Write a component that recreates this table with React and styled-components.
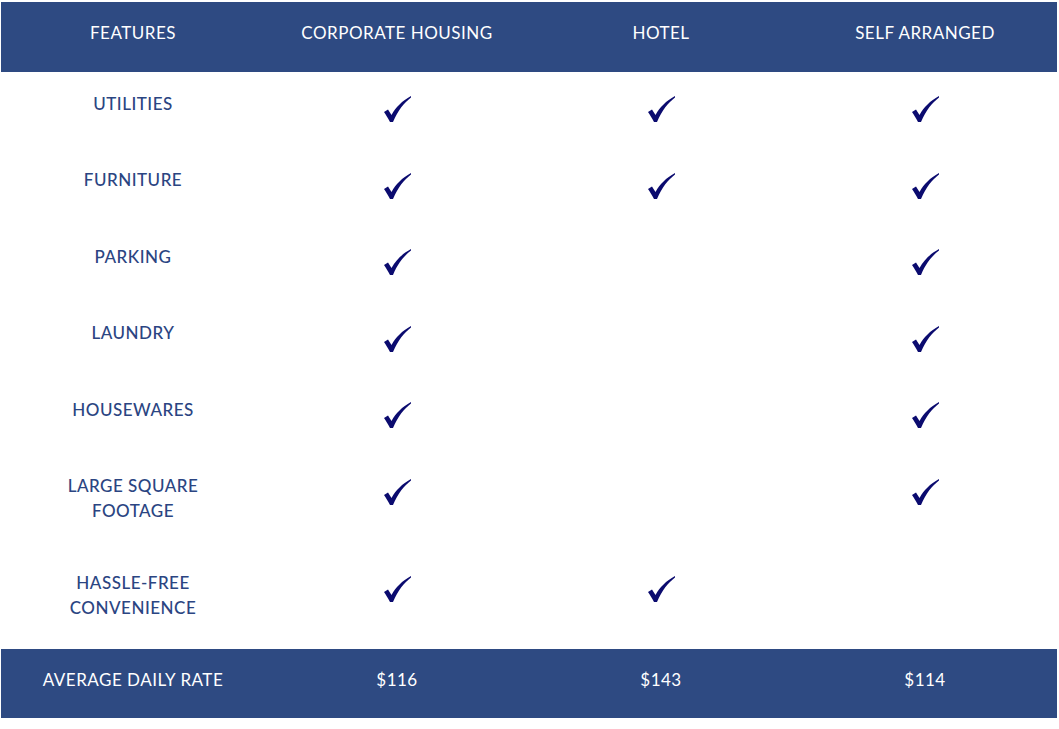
import React from "react";
import styled, { createGlobalStyle } from "styled-components";

const GlobalStyle = createGlobalStyle`
  body {
    margin: 0;
    background: #ffffff;
    font-family: "Lato", "Open Sans", sans-serif;
  }
`;

//전체 표
const Table = styled.div`
  width: 1056px;
  margin: 2px 1px 0;
`;

const Row = styled.div`
  display: grid;
  grid-template-columns: repeat(4, 264px);
  background: ${(p) => (p.$dark ? "#2e4a82" : "#ffffff")};
  min-height: ${(p) => p.$height}px;
  box-sizing: border-box;
`;

const Cell = styled.div`
  display: flex;
  flex-direction: column;
  align-items: center;
  text-align: center;
  padding-top: ${(p) => p.$top}px;
  font-size: 17px;
  line-height: 25px;
  letter-spacing: 0.5px;
  color: ${(p) => (p.$light ? "#ffffff" : "#2b4582")};
  font-weight: ${(p) => (p.$light ? 400 : 500)};
`;

const CheckWrap = styled.div`
  padding-top: 24px;
  display: flex;
  justify-content: center;
`;

const Check = () => (
  <svg width="27" height="26" viewBox="0 0 27 26">
    <path
      d="M0 16 L4 13.5 L7.5 19 C12 11 18 5 27 0 L27 1.5 C20 7 14 14 9 26 L6 26 C4 22 2 19 0 16 Z"
      fill="#0b0b6f"
    />
  </svg>
);

const headers = ["FEATURES", "CORPORATE HOUSING", "HOTEL", "SELF ARRANGED"];

const features = [
  { name: ["UTILITIES"], marks: [true, true, true] },
  { name: ["FURNITURE"], marks: [true, true, true] },
  { name: ["PARKING"], marks: [true, false, true] },
  { name: ["LAUNDRY"], marks: [true, false, true] },
  { name: ["HOUSEWARES"], marks: [true, false, true] },
  { name: ["LARGE SQUARE", "FOOTAGE"], marks: [true, false, true] },
  { name: ["HASSLE-FREE", "CONVENIENCE"], marks: [true, true, false] },
];

const rates = ["AVERAGE DAILY RATE", "$116", "$143", "$114"];

const App = () => {
  return (
    <>
      <GlobalStyle />
      <Table>
        <Row $dark $height={70}>
          {headers.map((h) => (
            <Cell key={h} $light $top={18}>
              {h}
            </Cell>
          ))}
        </Row>

        {features.map((f) => (
          <Row key={f.name[0]} $height={f.name.length > 1 ? 97 : 76.5}>
            <Cell $top={18.5}>
              {f.name.map((line) => (
                <span key={line}>{line}</span>
              ))}
            </Cell>
            {f.marks.map((m, i) => (
              <CheckWrap key={i}>{m && <Check />}</CheckWrap>
            ))}
          </Row>
        ))}

        <Row $dark $height={69}>
          {rates.map((r) => (
            <Cell key={r} $light $top={18.5}>
              {r}
            </Cell>
          ))}
        </Row>
      </Table>
    </>
  );
};

export default App;
